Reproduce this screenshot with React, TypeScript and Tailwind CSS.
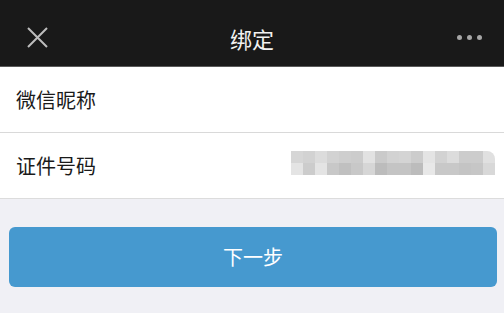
import React from "react";

const row1 = ["#d6d6d6","#d2d2d2","#dcdcdc","#d2d2d2","#cecece","#cccccc","#e2e2e2","#cacaca","#d2d2d2","#d4d4d4","#cccccc","#e4e4e4","#d2d2d2","#dcdcdc","#cccccc","#cccccc","#e0e0e0"];
const row2 = ["#e4e4e4","#cccccc","#e4e4e4","#c8c8c8","#c0c0c0","#c8c8c8","#d6d6d6","#bcbcbc","#c4c4c4","#c4c4c4","#bcbcbc","#e8e8e8","#c8c8c8","#c8c8c8","#c4c4c4","#c6c6c6","#d8d8d8"];

export default function App() {
  return (
    <div className="w-[504px] h-[313px] bg-[#f0f0f5] overflow-hidden" style={{ fontFamily: '"Noto Sans CJK SC", "Noto Sans", sans-serif' }}>
      <div className="h-[66px] bg-[#191919] pt-[9px] flex items-center justify-between relative">
        <svg className="ml-[27px]" width="21" height="21" viewBox="0 0 21 21">
          <path d="M1 1 L20 20 M20 1 L1 20" stroke="#bdbdbd" strokeWidth="2" />
        </svg>
        <div className="absolute left-0 right-0 top-[9px] bottom-0 flex items-center justify-center text-[22px] text-[#f2f2f2] leading-none">绑定</div>
        <div className="mr-[22px] flex gap-[5px]">
          <span className="w-[5px] h-[5px] rounded-full bg-[#a6a6a6]" />
          <span className="w-[5px] h-[5px] rounded-full bg-[#a6a6a6]" />
          <span className="w-[5px] h-[5px] rounded-full bg-[#a6a6a6]" />
        </div>
      </div>
      <div className="h-px bg-[#5a5a5a]" />
      <div className="bg-white">
        <div className="h-[66px] flex items-center pl-4 text-[20px] text-[#1a1a1a] border-b border-[#d9d9d9]">微信昵称</div>
        <div className="h-[66px] flex items-center pl-4 text-[20px] text-[#1a1a1a] border-b border-[#dcdcdc] relative">
          <span>证件号码</span>
          <div className="absolute left-[291px] top-[18px] flex flex-col">
            <div className="flex">
              {row1.map((c, i) => (
                <div key={i} className={i === row1.length - 1 ? "w-[12px] h-[12px] rounded-tr-[8px]" : "w-[12px] h-[12px]"} style={{ backgroundColor: c }} />
              ))}
            </div>
            <div className="flex">
              {row2.map((c, i) => (
                <div key={i} className="w-[12px] h-[12px]" style={{ backgroundColor: c }} />
              ))}
            </div>
          </div>
        </div>
      </div>
      <div className="pt-[28px] pl-[9px]">
        <div className="w-[488px] h-[60px] rounded-[6px] bg-[#4699cf] flex items-center justify-center text-white text-[20px]">下一步</div>
      </div>
    </div>
  );
}
